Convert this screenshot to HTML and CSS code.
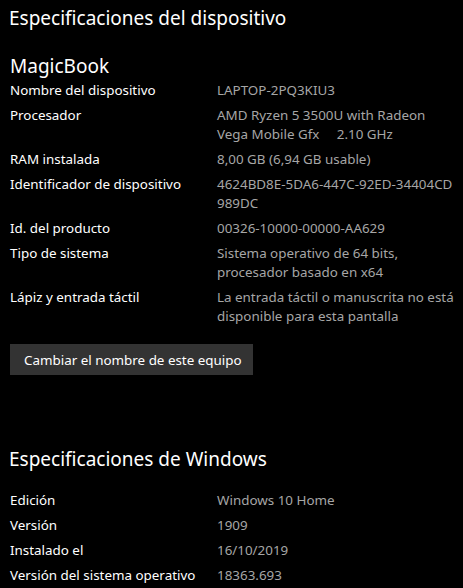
FILE: index.html
```html
<!DOCTYPE html>
<html lang="es">
<head>
    <meta charset="UTF-8">
    <link rel="stylesheet" href="styles.css">
    <title>Acerca de</title>
</head>
<body>
    <section class="specs">
        <h1 class="section-title">Especificaciones del dispositivo</h1>
        <h2 class="device-name">MagicBook</h2>
        <div class="spec-list">
            <div class="spec-row">
                <span class="spec-label">Nombre del dispositivo</span>
                <span class="spec-value">LAPTOP-2PQ3KIU3</span>
            </div>
            <div class="spec-row">
                <span class="spec-label">Procesador</span>
                <span class="spec-value">AMD Ryzen 5 3500U with Radeon<br>Vega Mobile Gfx&nbsp;&nbsp;&nbsp;&nbsp;&nbsp;2.10 GHz</span>
            </div>
            <div class="spec-row">
                <span class="spec-label">RAM instalada</span>
                <span class="spec-value">8,00 GB (6,94 GB usable)</span>
            </div>
            <div class="spec-row">
                <span class="spec-label">Identificador de dispositivo</span>
                <span class="spec-value">4624BD8E-5DA6-447C-92ED-34404CD<br>989DC</span>
            </div>
            <div class="spec-row">
                <span class="spec-label">Id. del producto</span>
                <span class="spec-value">00326-10000-00000-AA629</span>
            </div>
            <div class="spec-row">
                <span class="spec-label">Tipo de sistema</span>
                <span class="spec-value">Sistema operativo de 64 bits,<br>procesador basado en x64</span>
            </div>
            <div class="spec-row">
                <span class="spec-label">Lápiz y entrada táctil</span>
                <span class="spec-value">La entrada táctil o manuscrita no está<br>disponible para esta pantalla</span>
            </div>
        </div>
        <button class="rename-btn">Cambiar el nombre de este equipo</button>
    </section>

    <section class="specs windows">
        <h1 class="section-title">Especificaciones de Windows</h1>
        <div class="spec-list">
            <div class="spec-row">
                <span class="spec-label">Edición</span>
                <span class="spec-value">Windows 10 Home</span>
            </div>
            <div class="spec-row">
                <span class="spec-label">Versión</span>
                <span class="spec-value">1909</span>
            </div>
            <div class="spec-row">
                <span class="spec-label">Instalado el</span>
                <span class="spec-value">16/10/2019</span>
            </div>
            <div class="spec-row">
                <span class="spec-label">Versión del sistema operativo</span>
                <span class="spec-value">18363.693</span>
            </div>
        </div>
    </section>
</body>
</html>
```

FILE: styles.css
```css
body {
    margin: 0;
    padding: 0 10px;
    background: #000;
    color: #fff;
    font-family: 'Noto Sans', 'Open Sans', sans-serif;
    overflow: hidden;
}

.specs {
    padding-top: 4px;
}

.section-title {
    margin: 0;
    font-size: 19px;
    font-weight: normal;
    line-height: 28px;
    margin-left: -1px;
    white-space: nowrap;
}

.device-name {
    margin: 22px 0 0;
    font-size: 19px;
    font-weight: normal;
    line-height: 24px;
}

.spec-list {
    margin-top: 3px;
}

.spec-row {
    display: flex;
    font-size: 13.4px;
    line-height: 19px;
    margin-bottom: 6px;
    white-space: nowrap;
}

.spec-label {
    width: 207px;
    flex-shrink: 0;
}

.spec-value {
    color: #a6a6a6;
}

.rename-btn {
    display: block;
    margin-top: 18px;
    width: 243px;
    height: 31px;
    padding: 0 14px;
    background: #333;
    color: #fff;
    border: none;
    font-family: inherit;
    font-size: 13.4px;
    text-align: left;
    white-space: nowrap;
}

.windows {
    padding-top: 70px;
}

.windows .spec-list {
    margin-top: 18px;
}
```
